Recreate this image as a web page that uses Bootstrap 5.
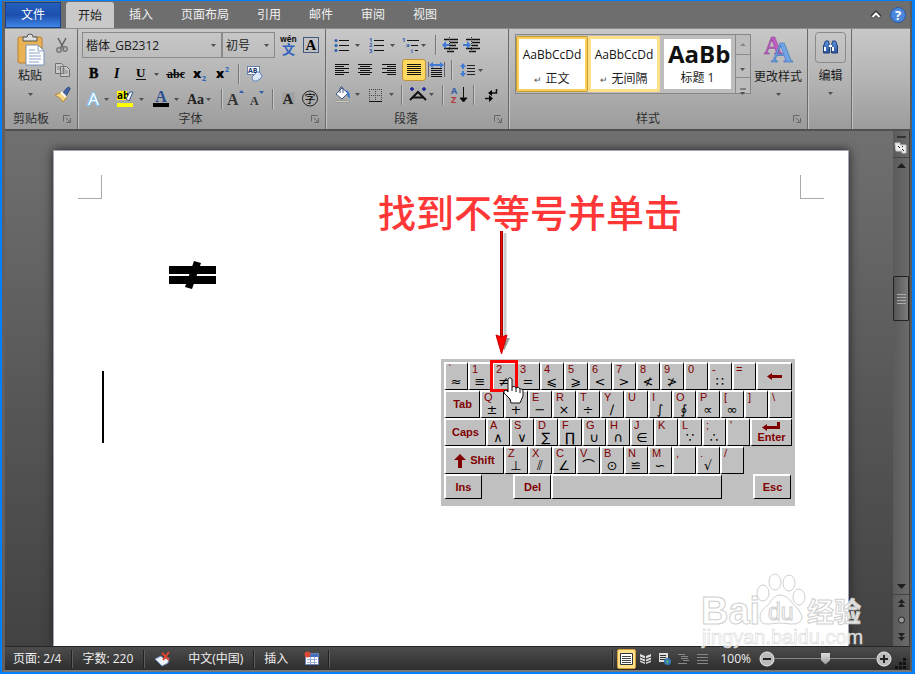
<!DOCTYPE html>
<html lang="zh-CN">
<head>
<meta charset="utf-8">
<meta name="viewport" content="width=device-width, initial-scale=1">
<title>文档编辑</title>
<link href="https://cdn.jsdelivr.net/npm/bootstrap@5.3.0/dist/css/bootstrap.min.css" rel="stylesheet">
<style>
body{font-family:"Open Sans","Noto Sans CJK SC",sans-serif;font-size:12px;line-height:16px;color:#1c1c1c}
button{font:inherit;color:inherit;background:none;border:0;padding:0}
svg{display:block;flex:none}
.app{border:2px solid #0080ff;border-top-width:1px;border-right-width:3px;background:#6e6e6e}
.frame{border:2px solid #777;border-left:3px solid #606060;border-top:0;border-right-color:#5c5c5c}
.tabs{height:27px;background:#6e6e6e;color:#f2f2f2}
.file-tab{width:56px;background:linear-gradient(#2560bd,#1c4fae 50%,#3f86e6);border:1px solid #164087;margin-top:1px;margin-right:5px;color:#fff}
.tab-item{padding:0 14px;color:inherit;text-decoration:none;line-height:27px}
.tab-on{padding:0 12px;margin-right:1px;background:#c9c9c9;color:#1c1c1c;border-radius:3px 3px 0 0;margin-top:1px}
.ribbon{height:103px;background:linear-gradient(#c8c8c8,#b4b4b4 50%,#9b9b9b);border-top:1px solid #8c8c8c;border-bottom:2px solid #505050}
.group{border-right:1px solid #6a6a6a;box-shadow:1px 0 0 #c4c4c4;padding:3px 2px 0 4px}
.g-clip{width:73px}.g-font{width:248px}.g-para{width:183px}.g-style{width:299px;padding-left:6px}.g-edit{width:44px}
.caption{height:18px;color:#2f2f2f}
.launch{right:3px;top:4px}
.tool-row{height:25px}
.tool{height:22px}
.sep{width:1px;height:20px;margin:0 3px;background:#777;box-shadow:1px 0 #c8c8c8}
.on{background:#ffd95f;border:1px solid #c2903a;border-radius:3px;width:24px}
.combo{height:26px;border:1px solid #8a8a8a;border-radius:0;background:transparent;padding:0 3px;appearance:none;font-size:12px;color:#1c1c1c;outline:0}
.combo-caret{right:6px;top:12px;pointer-events:none}
.c1{width:140px}.c2{width:53px}
.gallery{height:60px;border:1px solid #868686;background:#bdbdbd;margin-top:2px}
.sample{width:72px;height:56px;border:3px solid #e7e7e7;background:#fff;overflow:hidden;white-space:nowrap;border-radius:2px}
.sample-on{border-color:#ffd25a;outline:1px solid #c99b35;outline-offset:-1px}
.sample-hot{border-color:#ffe08a}
.sample-h{width:67px;height:50px;border:0;border-radius:0}
.face{font-size:12px;line-height:28px;height:28px;color:#111;margin-bottom:2px}
.face-lg{font-size:24px;font-weight:700;margin-top:-3px}
.ret{font-size:9px;color:#555}
.gscroll{width:15px;border-left:1px solid #8a8a8a}
.gscroll button{height:20px;border-bottom:1px solid #8a8a8a}
.work{background:linear-gradient(#707070,#585858 50%,#424242);min-height:0}
.page{margin:19px 44px 0 48px;background:#fff;border:1px solid #a4a4b6;border-bottom:0;box-shadow:0 0 9px #222;overflow:hidden}
.mark-row{padding:24px 24px 0}
.corner{width:24px;height:24px;border:solid #aaa;border-width:0 1px 1px 0}
.corner-r{border-width:0 0 1px 1px}
.left-col{padding:62px 0 0 48px}
.neq{margin-left:67px}
.caret-line{width:2px;height:72px;background:#000;margin-top:82px}
.right-col{width:417px;margin-right:53px;margin-top:-11px}
.note{font:500 38px/46px "Noto Sans CJK SC",sans-serif;color:#ff3737;white-space:nowrap}
.arrow{margin:-3px 0 0 113px}
.keys{width:354px;background:#c0c0c0;padding:3px 3px 7px;font-family:"Liberation Sans",sans-serif;font-size:11px;color:#800000;margin-top:4px}
.key{width:24px;height:28px;border:solid #fff;border-width:2px 1px 1px 2px;border-right-color:#000;border-bottom-color:#000;display:flex;flex-direction:column;align-items:flex-start;justify-content:flex-start;flex:none;line-height:11px;background:#c0c0c0;padding-left:2px;overflow:hidden}
.key span{height:11px}
.key em{font:normal 13px/14px "DejaVu Sans",sans-serif;color:#000;width:16px;text-align:center}
.wide{font-weight:700;align-items:center;justify-content:center;padding:0}
.w36{width:36px}.w42{width:42px}.w60{width:60px}.w38{width:38px}.w171{width:171px}
.low .key{height:25px}
.low .gap-key{margin-left:31px}
.pick{outline:3px solid #f00;outline-offset:-1px;z-index:1}
.hand{left:61px;top:17px;z-index:2}
.vbar{width:17px;background:linear-gradient(90deg,#5b5b5b,#6b6b6b);border-right:1px solid #3a3a3a}
.vtop{height:27px;border-bottom:1px solid #444}
.thumb{height:45px;margin-top:106px;border:1px solid #222;background:linear-gradient(90deg,#555,#7b7b7b);border-radius:1px}
.vend{height:52px;border-top:1px solid #444}
.status{height:24px;background:linear-gradient(#4c4c4c,#2e2e2e);border-top:1px solid #262626;color:#eee;padding:0 2px 0 8px}
.ssep{width:1px;height:18px;background:#222;box-shadow:1px 0 #5c5c5c}
.gapped{margin:0 10px}
.view{width:19px;height:20px;display:grid;place-items:center}
.view-on{background:#ffe08b;border:1px solid #d49b34;border-radius:2px}
.zoom{width:101px;height:16px;appearance:none;background:linear-gradient(#888,#888) center/100% 1px no-repeat;margin:0}
.zoom::-webkit-slider-thumb{appearance:none;width:9px;height:12px;background:linear-gradient(#ddd,#999);clip-path:polygon(0 0,100% 0,100% 65%,50% 100%,0 65%)}
.water{right:41px;bottom:19px;pointer-events:none}
</style>
<script src="https://cdn.jsdelivr.net/npm/bootstrap@5.3.0/dist/js/bootstrap.bundle.min.js"></script>
</head>
<body>
<svg width="0" height="0" class="position-absolute" aria-hidden="true"><defs>
<path id="dn" d="M0 0h5L2.500 3z" fill="#505050"/>
<g id="launch" fill="none" stroke="#666"><path d="M.5 6.500v-6h6M3 3l4 4M7.500 3v4.500H3.500"/></g>
<linearGradient id="blue" x2="0" y2="1"><stop stop-color="#5f97dd"/><stop offset="1" stop-color="#2a5099"/></linearGradient>
</defs></svg>
<div class="app vh-100 overflow-hidden">
<div class="frame h-100 d-flex flex-column position-relative">
 <nav class="tabs d-flex align-items-stretch">
  <button class="file-tab">文件</button>
  <a class="tab-item tab-on" href="#">开始</a><a class="tab-item" href="#">插入</a><a class="tab-item" href="#">页面布局</a><a class="tab-item" href="#">引用</a><a class="tab-item" href="#">邮件</a><a class="tab-item" href="#">审阅</a><a class="tab-item" href="#">视图</a>
  <div class="ms-auto d-flex align-items-center gap-2 pe-1">
   <button aria-label="折叠功能区"><svg width="12" height="12"><path d="M2 8l4-4 4 4" fill="none" stroke="#333" stroke-width="4"/><path d="M2.500 8L6 4.500 9.500 8" fill="none" stroke="#fff" stroke-width="2"/></svg></button>
   <button aria-label="帮助"><svg width="16" height="16"><circle cx="8" cy="8" r="7.500" fill="#4b87da" stroke="#275ca8"/><text x="8" y="13" font-size="13" font-weight="700" fill="#fff" text-anchor="middle">?</text></svg></button>
  </div>
 </nav>

 <div class="ribbon d-flex">
  <section class="group g-clip d-flex flex-column">
   <div class="d-flex flex-grow-1">
    <button class="d-flex flex-column align-items-center"><svg width="42" height="36"><rect x="9" y="5" width="24" height="26" rx="2" fill="#e9b253" stroke="#ba7f30"/><path d="M14 9V5h4q0-3 3-3t3 3h4v4z" fill="#ddd" stroke="#555"/><path d="M17 13h12l6 6v14H17z" fill="#fff" stroke="#7b93b8"/><path d="M29 13v6h6M20 18h6M20 21h11M20 24h12M20 27h12M20 30h10" fill="none" stroke="#89a2c9"/></svg><span>粘贴</span><svg width="7" height="16"><use href="#dn" x="1" y="9"/></svg></button>
    <div class="d-flex flex-column">
     <button class="tool-row" aria-label="剪切"><svg width="22" height="25"><path d="M7 6l6 11M15 6L9 17" stroke="#606060" stroke-width="1.500"/><circle cx="8" cy="18" r="2.200" fill="none" stroke="#777" stroke-width="1.500"/><circle cx="14" cy="17" r="2.200" fill="none" stroke="#777" stroke-width="1.500"/></svg></button>
     <button class="tool-row" aria-label="复制"><svg width="22" height="25"><path d="M4.500 6.500h6l2 2v8h-8zM9.500 9.500h6l3 3v7h-9z" fill="#c8c8c8" stroke="#707070"/><path d="M6 10h3M6 12h3M11 14h6M11 16h6M11 12h3" stroke="#888"/></svg></button>
     <button class="tool-row" aria-label="格式刷"><svg width="22" height="25"><path d="M12 11l4-5q3-2 3 1l-4 7z" fill="#4365a8" stroke="#2c477c"/><path d="M4 13l7-3 5 5-4 5q-2-4-8-7z" fill="#f7d685" stroke="#b58835"/><path d="M10 10l5 5" stroke="#fff" stroke-width="2"/></svg></button>
    </div>
   </div>
   <div class="caption position-relative ps-1">剪贴板<svg class="launch position-absolute" width="9" height="9"><use href="#launch"/></svg></div>
  </section>

  <section class="group g-font d-flex flex-column">
   <div class="tool-row d-flex align-items-center">
    <div class="position-relative"><input class="combo c1 d-block" aria-label="字体" value="楷体_GB2312"><svg class="combo-caret position-absolute" width="5" height="3"><use href="#dn"/></svg></div>
    <div class="position-relative"><input class="combo c2 d-block" aria-label="字号" value="初号"><svg class="combo-caret position-absolute" width="5" height="3"><use href="#dn"/></svg></div>
    <button class="tool ms-1" aria-label="拼音指南"><svg width="22" height="22"><text x="1" y="8" font-size="8" font-weight="700" fill="#111">wén</text><text x="3" y="20" font-size="13" font-weight="700" fill="#3162c0">文</text></svg></button>
    <button class="tool" aria-label="字符边框"><svg width="20" height="22"><rect x="2.500" y="3.500" width="15" height="15" fill="none" stroke="#415a80"/><text x="10" y="16" text-anchor="middle" font-family="Liberation Serif" font-size="15" font-weight="700">A</text></svg></button>
   </div>
   <div class="tool-row d-flex align-items-center mt-1">
    <button class="tool" aria-label="加粗"><svg width="23" height="22" font-family="Liberation Serif"><text x="7" y="15" font-size="14" font-weight="700" stroke="#111" stroke-width=".5">B</text></svg></button>
    <button class="tool" aria-label="倾斜"><svg width="24" height="22" font-family="Liberation Serif"><text x="9" y="15" font-size="14" font-style="italic" font-weight="700">I</text></svg></button>
    <button class="tool" aria-label="下划线"><svg width="34" height="22" font-family="Liberation Serif"><text x="7" y="14" font-size="13" font-weight="700">U</text><path d="M7 16.500h10" stroke="#111"/><use href="#dn" x="25" y="10"/></svg></button>
    <button class="tool" aria-label="删除线"><svg width="24" height="22" font-family="Liberation Serif"><text x="4" y="15" font-size="12" font-weight="700">abc</text><path d="M3 11.500h18" stroke="#111"/></svg></button>
    <button class="tool" aria-label="下标"><svg width="24" height="22"><text x="6" y="15" font-size="13" font-weight="800">x</text><text x="15" y="18" font-size="7" font-weight="700" fill="#2a62c0">2</text></svg></button>
    <button class="tool" aria-label="上标"><svg width="24" height="22"><text x="5" y="15" font-size="13" font-weight="800">x</text><text x="14" y="9" font-size="7" font-weight="700" fill="#2a62c0">2</text></svg></button>
    <i class="sep"></i>
    <button class="tool" aria-label="清除格式"><svg width="24" height="22"><rect x="5.500" y="3.500" width="12" height="8" fill="#fff" stroke="#6882ab"/><text x="6" y="10" font-size="7" font-weight="700" fill="#1b3974">AB</text><path d="M10 14l5-5q2-1 4 2t0 4l-4 3q-5 1-5-4z" fill="#dce7f7" stroke="#5b82bd"/></svg></button>
   </div>
   <div class="tool-row d-flex align-items-center">
    <button class="tool" aria-label="文本效果"><svg width="34" height="22"><text x="6" y="17" font-size="17" fill="#fff" stroke="#7ec1f3" stroke-width="2" paint-order="stroke">A</text><use href="#dn" x="22" y="10"/></svg></button>
    <button class="tool" aria-label="突出显示"><svg width="34" height="22"><path d="M1 3h10v9H1z" fill="#ff0"/><text x="1" y="11" font-size="10" font-weight="700">ab</text><path d="M10 11l4-7h3l-4 9z" fill="#fff" stroke="#375c93"/><path d="M1 15h16v4H1z" fill="#ff0"/><use href="#dn" x="23" y="10"/></svg></button>
    <button class="tool" aria-label="字体颜色"><svg width="34" height="22"><text x="11" y="14" text-anchor="middle" font-family="Liberation Serif" font-size="16" font-weight="700" fill="#284d91">A</text><path d="M3 15h16v4H3z"/><use href="#dn" x="24" y="10"/></svg></button>
    <button class="tool" aria-label="更改大小写"><svg width="34" height="22"><text x="3" y="16" font-family="Liberation Serif" font-size="14" font-weight="700" fill="#222">Aa</text><use href="#dn" x="22" y="10"/></svg></button>
    <i class="sep"></i>
    <button class="tool" aria-label="增大字体"><svg width="22" height="22"><text x="2" y="17" font-family="Liberation Serif" font-size="16" font-weight="700" fill="#333">A</text><path d="M14 5l2.500-3L19 5z" fill="#2f5fae"/></svg></button>
    <button class="tool" aria-label="缩小字体"><svg width="22" height="22"><text x="3" y="17" font-family="Liberation Serif" font-size="12" font-weight="700" fill="#333">A</text><path d="M12 3l2.500 3L17 3z" fill="#2f5fae"/></svg></button>
    <i class="sep"></i>
    <button class="tool" aria-label="字符底纹"><svg width="23" height="22"><path d="M6 4h13v14H6z" fill="#a2a2a2"/><text x="12" y="16" text-anchor="middle" font-family="Liberation Serif" font-size="15" font-weight="700" fill="#222">A</text></svg></button>
    <button class="tool" aria-label="带圈字符"><svg width="24" height="22"><circle cx="11" cy="10.500" r="7.500" fill="none" stroke="#222"/><text x="11" y="15" text-anchor="middle" font-size="11">字</text></svg></button>
   </div>
   <div class="caption position-relative text-center mt-auto pe-4">字体<svg class="launch position-absolute" width="9" height="9"><use href="#launch"/></svg></div>
  </section>

  <section class="group g-para d-flex flex-column">
   <div class="tool-row d-flex align-items-center">
    <button class="tool" aria-label="项目符号"><svg width="34" height="22"><path d="M9 6.500h10M9 11.500h10M9 16.500h10" stroke="#111"/><g fill="#2b5dad"><circle cx="6" cy="6.500" r="1.500"/><circle cx="6" cy="11.500" r="1.500"/><circle cx="6" cy="16.500" r="1.500"/></g><use href="#dn" x="25" y="10"/></svg></button>
    <button class="tool" aria-label="编号"><svg width="34" height="22"><path d="M10 6.500h10M10 11.500h10M10 16.500h10" stroke="#111"/><g fill="#2b5dad" font-size="6" font-weight="700"><text x="5" y="8">1</text><text x="5" y="13">2</text><text x="5" y="19">3</text></g><use href="#dn" x="26" y="10"/></svg></button>
    <button class="tool" aria-label="多级列表"><svg width="34" height="22"><path d="M9 6.500h12M13 11.500h7M17 16.500h3" stroke="#111"/><g fill="#2b5dad" font-size="6" font-weight="700"><text x="4" y="8">1</text><text x="8" y="13">a</text><text x="13" y="19">i</text></g><use href="#dn" x="23" y="10"/></svg></button>
    <i class="sep"></i>
    <button class="tool" aria-label="减少缩进"><svg width="22" height="22"><path d="M5 5.500h14M11 8.500h8M11 11.500h6M5 14.500h14M8 17.500h7" stroke="#111" stroke-width="1.500"/><path d="M3 11l4-4v3h4v2H7v3z" fill="#3f7bd4"/><path d="M10.500 3v16" stroke="#333" stroke-dasharray="1 1"/></svg></button>
    <button class="tool" aria-label="增加缩进"><svg width="22" height="22"><path d="M5 5.500h14M11 8.500h8M11 11.500h6M5 14.500h14M8 17.500h7" stroke="#111" stroke-width="1.500"/><path d="M10 11L6 7v3H2v2h4v3z" fill="#3f7bd4"/><path d="M10.500 3v16" stroke="#333" stroke-dasharray="1 1"/></svg></button>
   </div>
   <div class="tool-row d-flex align-items-center">
    <button class="tool" aria-label="左对齐"><svg width="24" height="22"><path d="M5 5.500h14M5 7.500h9M5 9.500h14M5 11.500h9M5 13.500h14M5 15.500h9" stroke="#111"/></svg></button>
    <button class="tool" aria-label="居中"><svg width="24" height="22"><path d="M4 5.500h14M6 7.500h10M4 9.500h14M6 11.500h10M4 13.500h14M6 15.500h10" stroke="#111"/></svg></button>
    <button class="tool" aria-label="右对齐"><svg width="24" height="22"><path d="M4 5.500h14M9 7.500h9M4 9.500h14M9 11.500h9M4 13.500h14M9 15.500h9" stroke="#111"/></svg></button>
    <button class="tool on" aria-label="两端对齐"><svg width="22" height="20"><path d="M4 4.500h14M4 6.500h14M4 8.500h14M4 10.500h14M4 12.500h14M4 14.500h14" stroke="#111"/></svg></button>
    <button class="tool" aria-label="分散对齐"><svg width="22" height="22"><path d="M5 9.500h11M5 11.500h11M5 13.500h11M5 15.500h11M5 17.500h11" stroke="#111"/><path d="M2.500 3v15M18.500 3v15" stroke="#667"/><path d="M3 6l4-3v2h7V3l4 3-4 3V7H7v2z" fill="#3f7bd4"/></svg></button>
    <i class="sep"></i>
    <button class="tool" aria-label="行距"><svg width="34" height="22"><path d="M12 6.500h8M12 9.500h8M12 12.500h8M12 15.500h8" stroke="#222"/><path d="M5 8l3-4 3 4H9v2H7V8zM5 14l3 4 3-4H9v-2H7v2z" fill="#3f7bd4"/><use href="#dn" x="23" y="10"/></svg></button>
   </div>
   <div class="tool-row d-flex align-items-center">
    <button class="tool" aria-label="底纹"><svg width="34" height="22"><path d="M6 10l6-6 6 5-6 6z" fill="#fff" stroke="#3c5785"/><path d="M10 9V4q1-3 3 0v5" fill="none" stroke="#3c5785"/><path d="M15 6q5 0 5 8-3 0-3-5z" fill="#3e78cc"/><path d="M4.500 16.500h15v2h-15z" fill="#d0ccc0" stroke="#999"/><use href="#dn" x="25" y="9"/></svg></button>
    <button class="tool" aria-label="边框"><svg width="34" height="22"><path d="M5.500 5v12M11.500 5v12M17.500 5v12M5 5.500h13M5 11.500h13" stroke="#444" stroke-dasharray="1 1"/><path d="M5 17.500h13" stroke="#111"/><use href="#dn" x="25" y="9"/></svg></button>
    <i class="sep"></i>
    <button class="tool" aria-label="中文版式"><svg width="34" height="22"><path d="M5 16l8-8 8 8M8 13.500h10" fill="none" stroke="#111" stroke-width="2"/><path d="M7 3v4M5 5h4M19 3v4M17 5h4" stroke="#1a1e9b" stroke-width="1.500"/><use href="#dn" x="24" y="9"/></svg></button>
    <i class="sep"></i>
    <button class="tool" aria-label="排序"><svg width="24" height="22" font-weight="700" font-size="9"><text x="5" y="10" fill="#315eae">A</text><text x="5" y="19" fill="#b73b3b">Z</text><path d="M17.500 3v13M14 14l3.500 4 3.500-4z" stroke="#111"/></svg></button>
    <i class="sep"></i>
    <button class="tool" aria-label="显示段落标记"><svg width="24" height="22"><path d="M19.500 5v4H14M8 14.500h6" fill="none" stroke="#111" stroke-width="1.500"/><path d="M15 6v6l-4-3zM12 11l4 3.500-4 3.500z"/></svg></button>
   </div>
   <div class="caption position-relative text-center mt-auto pe-4">段落<svg class="launch position-absolute" width="9" height="9"><use href="#launch"/></svg></div>
  </section>

  <section class="group g-style d-flex flex-column">
   <div class="d-flex flex-grow-1">
    <div class="gallery d-flex align-items-center">
     <button class="sample sample-on"><div class="face">AaBbCcDd</div><div><span class="ret">↵</span> 正文</div></button>
     <button class="sample sample-hot"><div class="face">AaBbCcDd</div><div><span class="ret">↵</span> 无间隔</div></button>
     <button class="sample sample-h mx-1 text-start"><div class="face face-lg ps-1">AaBb</div><div class="text-center">标题 1</div></button>
     <div class="gscroll h-100">
      <button aria-label="上一行"><svg width="14" height="18"><path d="M4 10l3-3 3 3z" fill="#888"/></svg></button>
      <button aria-label="下一行"><svg width="14" height="18"><use href="#dn" x="4" y="9"/></svg></button>
      <button class="border-0" aria-label="更多"><svg width="14" height="18"><path d="M4 7h6" stroke="#444"/><use href="#dn" x="4" y="10"/></svg></button>
     </div>
    </div>
    <button class="d-flex flex-column align-items-center flex-grow-1"><svg width="34" height="37" font-family="Liberation Serif" font-weight="700"><text x="3" y="22" font-size="25" fill="#c15ec2" stroke="#8c3b92" stroke-width=".5">A</text><text x="10" y="30" font-size="30" fill="#72a5e8" stroke="#2d65b1" stroke-width=".5">A</text></svg><span>更改样式</span><svg width="7" height="14"><use href="#dn" x="1" y="8"/></svg></button>
   </div>
   <div class="caption position-relative text-center pe-4">样式<svg class="launch position-absolute" width="9" height="9"><use href="#launch"/></svg></div>
  </section>

  <section class="group g-edit">
   <button class="d-flex flex-column align-items-center w-100"><svg width="32" height="32"><rect x=".5" y=".5" width="30" height="30" rx="3" fill="none" stroke="#888"/><path d="M8.500 21v-7l2-5h3l1 5v7zM16.500 21v-7l1-5h3l2 5v7z" fill="url(#blue)" stroke="#1e3e76"/><path d="M10 15v4M18 15v4M14 14h3" stroke="#fff" stroke-width="2"/></svg><span class="mt-1">编辑</span><svg width="7" height="14"><use href="#dn" x="1" y="8"/></svg></button>
  </section>
 </div>

 <main class="work flex-grow-1 d-flex">
  <div class="page flex-grow-1">
   <div class="mark-row d-flex justify-content-between"><i class="corner"></i><i class="corner corner-r"></i></div>
   <div class="d-flex justify-content-between">
    <div class="left-col">
     <svg class="neq" width="48" height="28"><path d="M0 5h47v8H0zM0 15h47v8H0z"/><path d="M25 0l7 2-9 26-7-2z"/></svg>
     <div class="caret-line"></div>
    </div>
    <div class="right-col">
     <div class="note">找到不等号并单击</div>
     <svg class="arrow" width="24" height="124"><path d="M14 2v112" stroke="#aaa" stroke-width="3" opacity=".6"/><path d="M10 107h9l-6 13z" fill="#777" opacity=".7"/><path d="M10.500 0v108" stroke="#a10000" stroke-width="3"/><path d="M10.500 0v108" stroke="#e11" stroke-width="1"/><path d="M5 104l5.500 2 5.500-2-5.500 19z" fill="#f00" stroke="#c00"/></svg>
     <div class="keys ms-auto position-relative">
      <div class="d-flex"><button class="key"><span>`</span><em>≈</em></button><button class="key"><span>1</span><em>≡</em></button><button class="key pick"><span>2</span><em>≠</em></button><button class="key"><span>3</span><em>=</em></button><button class="key"><span>4</span><em>⩽</em></button><button class="key"><span>5</span><em>⩾</em></button><button class="key"><span>6</span><em>&lt;</em></button><button class="key"><span>7</span><em>&gt;</em></button><button class="key"><span>8</span><em>≮</em></button><button class="key"><span>9</span><em>≯</em></button><button class="key"><span>0</span></button><button class="key"><span>-</span><em>∷</em></button><button class="key"><span>=</span></button><button class="key wide w36" aria-label="退格"><svg width="16" height="9"><path d="M0 4.500L5 1v2h10v3H5v2z" fill="#800000"/></svg></button></div>
      <div class="d-flex"><button class="key wide w36">Tab</button><button class="key"><span>Q</span><em>±</em></button><button class="key"><span>W</span><em>+</em></button><button class="key"><span>E</span><em>−</em></button><button class="key"><span>R</span><em>×</em></button><button class="key"><span>T</span><em>÷</em></button><button class="key"><span>Y</span><em>∕</em></button><button class="key"><span>U</span></button><button class="key"><span>I</span><em>∫</em></button><button class="key"><span>O</span><em>∮</em></button><button class="key"><span>P</span><em>∝</em></button><button class="key"><span>[</span><em>∞</em></button><button class="key"><span>]</span></button><button class="key"><span>\</span></button></div>
      <div class="d-flex"><button class="key wide w42">Caps</button><button class="key"><span>A</span><em>∧</em></button><button class="key"><span>S</span><em>∨</em></button><button class="key"><span>D</span><em>∑</em></button><button class="key"><span>F</span><em>∏</em></button><button class="key"><span>G</span><em>∪</em></button><button class="key"><span>H</span><em>∩</em></button><button class="key"><span>J</span><em>∈</em></button><button class="key"><span>K</span></button><button class="key"><span>L</span><em>∵</em></button><button class="key"><span>;</span><em>∴</em></button><button class="key"><span>'</span></button><button class="key wide w42"><svg width="20" height="10"><path d="M0 5.500L5 2v2h10V0h3v7H5v2z" fill="#800000"/></svg>Enter</button></div>
      <div class="d-flex"><button class="key wide w60 flex-row gap-1"><svg width="12" height="14"><path d="M6 0l6 6H8v8H4V6H0z" fill="#800000"/></svg>Shift</button><button class="key"><span>Z</span><em>⊥</em></button><button class="key"><span>X</span><em>⫽</em></button><button class="key"><span>C</span><em>∠</em></button><button class="key"><span>V</span><em>⌒</em></button><button class="key"><span>B</span><em>⊙</em></button><button class="key"><span>N</span><em>≌</em></button><button class="key"><span>M</span><em>∽</em></button><button class="key"><span>,</span></button><button class="key"><span>.</span><em>√</em></button><button class="key"><span>/</span></button></div>
      <div class="low d-flex"><button class="key wide w38">Ins</button><button class="key wide w38 gap-key">Del</button><button class="key w171" aria-label="空格"></button><button class="key wide w38 gap-key">Esc</button></div>
      <svg class="hand position-absolute" width="22" height="28"><path d="M6 3q2-3 4 0v8q3-2 4 1 3-2 4 1 3-1 3 2v5l-3 7H9l-1-4-6-6q-1-3 2-3l2 2z" fill="#fff" stroke="#111"/><path d="M10 11v4M14 12v4M18 13v4" stroke="#111"/></svg>
     </div>
    </div>
   </div>
  </div>
  <div class="vbar d-flex flex-column">
   <div class="vtop"><svg width="16" height="27"><path d="M4 5h9v2H4z" fill="#333"/><path d="M2 12h5v2h6v8H9v-2H3z" fill="#eee" stroke="#ccc"/><path d="M5 15l2 2M9 18l2 2M9 15l1 1" stroke="#222"/></svg></div>
   <svg width="16" height="12"><path d="M4 10l4.500-5 4.500 5z" fill="#1e1e1e"/></svg>
   <div class="thumb d-grid align-items-center"><svg class="mx-auto" width="9" height="10"><path d="M0 .5h9M0 3.500h9M0 6.500h9M0 9.500h9" stroke="#aaa"/></svg></div>
   <svg class="mt-auto" width="16" height="14"><path d="M4 4l4.500 5L13 4z" fill="#1e1e1e"/></svg>
   <div class="vend"><svg width="16" height="51"><path d="M5 8l3.500-4L12 8zM5 12l3.500-4 3.500 4zM5 38l3.500 4 3.500-4zM5 42l3.500 4 3.500-4z" fill="#1e1e1e"/><circle cx="8.500" cy="25" r="3" fill="#999" stroke="#222"/></svg></div>
  </div>
 </main>

 <footer class="status d-flex align-items-center">
  <span>页面: 2/4</span><i class="ssep gapped"></i><span>字数: 220</span><i class="ssep gapped"></i>
  <svg width="18" height="16"><path d="M1 8l6-3 3 3 5-1-1 5-6 3z" fill="#eef3fb" stroke="#7390c0"/><path d="M8 2l7 7M15 1L9 9" stroke="#e2472e" stroke-width="2"/></svg>
  <span class="ms-3">中文(中国)</span><i class="ssep gapped"></i><span>插入</span>
  <svg class="ms-3 me-2" width="16" height="15"><path d="M1.500 2.500h13v11h-13z" fill="#fff" stroke="#6984b4"/><path d="M2 3h12v3H2z" fill="#446fc0"/><path d="M3 8.500h10M3 11.500h10M6.500 6v7M10.500 6v7" stroke="#9bb0d6"/><circle cx="3.500" cy="3.500" r="3" fill="#dc4a37"/></svg><i class="ssep"></i>
  <i class="ssep ms-auto me-1"></i>
  <button class="view view-on" aria-label="页面视图"><svg width="13" height="12"><path d="M.5.500h12v11H.500z" fill="#fff" stroke="#333"/><path d="M2 3.500h9M2 5.500h9M2 7.500h9M2 9.500h9" stroke="#444"/></svg></button>
  <button class="view" aria-label="阅读视图"><svg width="11" height="12"><path d="M0 1l5 2v8L0 9zM11 1L6 3v8l5-2z" fill="#ddd"/><path d="M0 4l5 2M0 7l5 2M11 4L6 6M11 7L6 9" stroke="#333"/></svg></button>
  <button class="view" aria-label="Web视图"><svg width="12" height="12"><path d="M0 0h9v9H0z" fill="#ddd"/><path d="M1 2.500h6M1 4.500h6M1 6.500h5" stroke="#333"/><circle cx="8.500" cy="8.500" r="3.500" fill="#3379b8"/><path d="M7 7l3 1-2 3z" fill="#61b16b"/></svg></button>
  <button class="view" aria-label="大纲视图"><svg width="11" height="12"><path d="M0 1.500h7M3 3.500h7M3 5.500h7M5 7.500h6M0 10.500h9" stroke="#888"/></svg></button>
  <button class="view" aria-label="草稿"><svg width="11" height="12"><path d="M0 1.500h11M0 4.500h11M0 7.500h11M0 10.500h11" stroke="#888"/></svg></button>
  <span class="ms-2 me-2">100%</span>
  <button aria-label="缩小"><svg width="16" height="16"><circle cx="8" cy="8" r="7" fill="#bbb" stroke="#eee"/><path d="M4 8h8" stroke="#222" stroke-width="2"/></svg></button>
  <input class="zoom" type="range" aria-label="缩放" value="50">
  <button aria-label="放大"><svg width="16" height="16"><circle cx="8" cy="8" r="7" fill="#bbb" stroke="#eee"/><path d="M4 8h8M8 4v8" stroke="#222" stroke-width="2"/></svg></button>
  <svg class="align-self-end" width="16" height="14"><path d="M11 2h3v3h-3zM7 6h3v3H7zM11 6h3v3h-3zM3 10h3v3H3zM7 10h3v3H7zM11 10h3v3h-3z" fill="#111"/></svg>
 </footer>

 <svg class="water position-absolute" width="168" height="78" fill="#fff" fill-opacity=".85" stroke="#d0d0d0" font-family="Liberation Sans">
  <text x="0" y="51" font-size="38" font-weight="700">Bai</text>
  <path d="M79 22q-6 0-11 9-9 7-9 12-1 9 9 8 11-2 22 0 11 1 11-8-2-6-9-12-6-9-13-9z"/>
  <ellipse cx="62" cy="20" rx="6" ry="8"/><ellipse cx="74" cy="9" rx="6" ry="8"/><ellipse cx="88" cy="10" rx="6" ry="8"/><ellipse cx="98" cy="24" rx="6" ry="8"/>
  <text x="67" y="47" font-size="23">du</text>
  <text x="106" y="49" font-size="27" font-weight="700" font-family="Noto Sans CJK SC">经验</text>
  <text x="1" y="71" font-size="20" stroke-width=".5">jingyan.baidu.com</text>
 </svg>
</div>
</div>
</body>
</html>
